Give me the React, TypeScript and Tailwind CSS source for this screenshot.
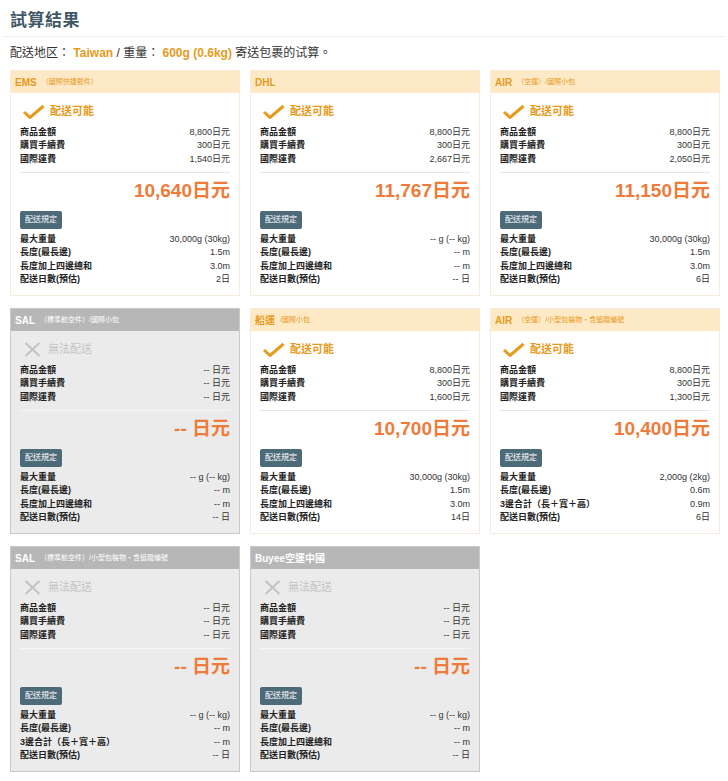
type Card = {
  name: string;
  sub?: string;
  ok: boolean;
  fees: string[];
  total: string;
  third: string;
  specs: string[];
};

const LABELS = ['商品金額', '購買手續費', '國際運費'];
const SIDE = '長度加上四邊總和';
const SUM3 = '3邊合計（長＋寬＋高）';
const NONE = ['-- 日元', '-- 日元', '-- 日元'];
const NO_SPECS = ['-- g (-- kg)', '-- m', '-- m', '-- 日'];

const cards: Card[] = [
  { name: 'EMS', sub: '（國際快捷郵件）', ok: true, fees: ['8,800日元', '300日元', '1,540日元'], total: '10,640日元', third: SIDE, specs: ['30,000g (30kg)', '1.5m', '3.0m', '2日'] },
  { name: 'DHL', ok: true, fees: ['8,800日元', '300日元', '2,667日元'], total: '11,767日元', third: SIDE, specs: NO_SPECS },
  { name: 'AIR', sub: '（空運）/國際小包', ok: true, fees: ['8,800日元', '300日元', '2,050日元'], total: '11,150日元', third: SIDE, specs: ['30,000g (30kg)', '1.5m', '3.0m', '6日'] },
  { name: 'SAL', sub: '（標準航空件）/國際小包', ok: false, fees: NONE, total: '-- 日元', third: SIDE, specs: NO_SPECS },
  { name: '船運', sub: '/國際小包', ok: true, fees: ['8,800日元', '300日元', '1,600日元'], total: '10,700日元', third: SIDE, specs: ['30,000g (30kg)', '1.5m', '3.0m', '14日'] },
  { name: 'AIR', sub: '（空運）/小型包裝物・含追蹤編號', ok: true, fees: ['8,800日元', '300日元', '1,300日元'], total: '10,400日元', third: SUM3, specs: ['2,000g (2kg)', '0.6m', '0.9m', '6日'] },
  { name: 'SAL', sub: '（標準航空件）/小型包裝物・含追蹤編號', ok: false, fees: NONE, total: '-- 日元', third: SUM3, specs: NO_SPECS },
  { name: 'Buyee空運中國', ok: false, fees: NONE, total: '-- 日元', third: SIDE, specs: NO_SPECS },
];

function Row({ label, value }: { label: string; value: string }) {
  return (
    <div className="flex h-[13.3px] items-center justify-between text-[9px] leading-none">
      <span className="font-bold text-[#222]">{label}</span>
      <span className="text-[#333]">{value}</span>
    </div>
  );
}

function ShipCard({ c }: { c: Card }) {
  const specLabels = ['最大重量', '長度(最長邊)', c.third, '配送日數(預估)'];
  return (
    <div className={`flex h-[226px] flex-col border ${c.ok ? 'border-[#f5ecdb] bg-white' : 'border-[#c9c9c9] bg-[#ebebeb]'}`}>
      {/* header */}
      <div className={`flex h-[22px] shrink-0 items-center gap-[5px] px-[4px] ${c.ok ? 'bg-[#fde9c6] text-[#e89a1c]' : 'bg-[#b7b7b7] text-white'}`}>
        <span className="text-[10px] font-bold">{c.name}</span>
        {c.sub && <span className="text-[7px]">{c.sub}</span>}
      </div>

      <div className="flex flex-col px-[9px] pb-[9px]">
        {/* status */}
        <div className="mt-[9px] flex h-[18px] items-center gap-[5px]">
          {c.ok ? (
            <svg width="23" height="15" viewBox="0 0 23 15" className="ml-[2px]">
              <polyline points="2,8 8,13.5 21.5,2" fill="none" stroke="#e89a1c" strokeWidth="3" />
            </svg>
          ) : (
            <svg width="17" height="15" viewBox="0 0 17 15" className="ml-[4px] mr-[2px]">
              <path d="M1.5 1 L15.5 14 M15.5 1 L1.5 14" stroke="#c3c3c3" strokeWidth="2" />
            </svg>
          )}
          <span className={`text-[11px] ${c.ok ? 'font-bold text-[#e89a1c]' : 'font-normal text-[#c3c3c3]'}`}>
            {c.ok ? '配送可能' : '無法配送'}
          </span>
        </div>

        <div className="mt-[6px]">
          {LABELS.map((l, i) => (
            <Row key={l} label={l} value={c.fees[i]} />
          ))}
        </div>

        <div className={`mt-[6px] border-t ${c.ok ? 'border-[#e6e6e6]' : 'border-[#f6f6f6]'}`} />

        <div className="mt-[6px] h-[24px] text-right text-[19px] font-bold leading-[24px] text-[#ef7b3a]">{c.total}</div>

        <div className="mt-[8px] flex">
          <span className="flex h-[18px] items-center rounded-[2px] bg-[#4d6a79] px-[5px] text-[8px] text-white">配送規定</span>
        </div>

        <div className="mt-[4px]">
          {specLabels.map((l, i) => (
            <Row key={i} label={l} value={c.specs[i]} />
          ))}
        </div>
      </div>
    </div>
  );
}

export default function App() {
  return (
    <div className="min-h-[781px] w-[728px] bg-white font-['Liberation_Sans','Noto_Sans_CJK_TC',sans-serif]">
      <div className="mx-[4px] border-b border-[#eeeeee] px-[6px] pb-[4px] pt-[10px]">
        <h1 className="text-[17px] font-bold leading-[22px] tracking-[0.5px] text-[#3f5867]">試算結果</h1>
      </div>
      <p className="mt-[7px] px-[10px] text-[12px] leading-[18px] text-[#333]">
        配送地区：{' '}
        <span className="font-bold text-[#e89a1c]">Taiwan</span> / 重量：{' '}
        <span className="font-bold text-[#e89a1c]">600g</span>{' '}
        <span className="font-bold text-[#e89a1c]">(0.6kg)</span> 寄送包裹的试算。
      </p>
      <div className="mt-[8px] grid grid-cols-[230px_230px_230px] gap-x-[10px] gap-y-[12px] px-[10px]">
        {cards.map((c, i) => (
          <ShipCard key={i} c={c} />
        ))}
      </div>
    </div>
  );
}
